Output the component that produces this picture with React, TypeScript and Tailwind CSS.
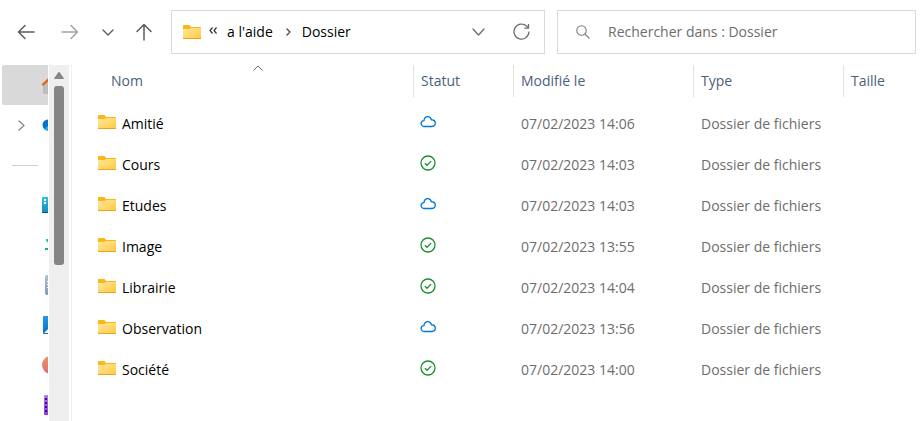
import React from "react";

type Status = "cloud" | "local";

interface Folder {
  name: string;
  status: Status;
  modified: string;
}

const folders: Folder[] = [
  { name: "Amitié", status: "cloud", modified: "07/02/2023 14:06" },
  { name: "Cours", status: "local", modified: "07/02/2023 14:03" },
  { name: "Etudes", status: "cloud", modified: "07/02/2023 14:03" },
  { name: "Image", status: "local", modified: "07/02/2023 13:55" },
  { name: "Librairie", status: "local", modified: "07/02/2023 14:04" },
  { name: "Observation", status: "cloud", modified: "07/02/2023 13:56" },
  { name: "Société", status: "local", modified: "07/02/2023 14:00" },
];

function FolderIcon() {
  return (
    <svg width="18" height="14" viewBox="0 0 18 14" className="shrink-0" aria-hidden="true">
      <defs>
        <linearGradient id="folder-front" x1="0" y1="0" x2="1" y2="1">
          <stop offset="0" stopColor="#ffe7a0" />
          <stop offset="1" stopColor="#ffca3e" />
        </linearGradient>
      </defs>
      <path d="M0 .5Q0 0 .5 0H6.500L8 2h9.500q.5 0 .5.500V5H0z" fill="#f9b719" />
      <path d="M0 4h6.500L8 3h10v10.500H0z" fill="url(#folder-front)" />
      <path d="M0 13h18v.5q0 .5-.5.500H.5Q0 14 0 13.500z" fill="#e6a61e" />
    </svg>
  );
}

function Chevron({ dir, width, height, color }: { dir: "down" | "right"; width: number; height: number; color: string }) {
  const d =
    dir === "down"
      ? `M1 1L${width / 2} ${height - 1}L${width - 1} 1`
      : `M1 1L${width - 1} ${height / 2}L1 ${height - 1}`;
  return (
    <svg width={width} height={height} fill="none" stroke={color} strokeWidth="1.4" strokeLinecap="round" strokeLinejoin="round" aria-hidden="true">
      <path d={d} />
    </svg>
  );
}

function Arrow({ d, color }: { d: string; color: string }) {
  return (
    <svg width="18" height="18" viewBox="0 0 18 18" fill="none" stroke={color} strokeWidth="1.500" strokeLinecap="round" strokeLinejoin="round" aria-hidden="true">
      <path d={d} />
    </svg>
  );
}

function StatusIcon({ status }: { status: Status }) {
  if (status === "cloud") {
    return (
      <svg width="16" height="16" viewBox="0 0 16 16" fill="none" stroke="#0078d7" strokeWidth="1.300" strokeLinejoin="round" role="img" aria-label="Disponible en ligne">
        <path d="M4 12.500A2.900 2.900 0 0 1 4 6.700C4 4.300 5.600 2.600 7.700 2.600c1.900 0 3.200 1.200 3.700 3.200h.8c1.800.1 3.100 1.500 3.100 3.300 0 1.900-1.400 3.400-3.300 3.400z" />
      </svg>
    );
  }
  return (
    <svg width="16" height="16" viewBox="0 0 16 16" fill="none" stroke="#1a8f2e" strokeWidth="1.300" role="img" aria-label="Disponible sur cet appareil">
      <circle cx="8" cy="8" r="7" />
      <path d="M4.900 8.200L7 10.300 11.200 6.100" />
    </svg>
  );
}

function HomeIcon() {
  return (
    <svg width="20" height="20" viewBox="0 0 20 20" aria-hidden="true">
      <path d="M1 9l9-7 9 7v9q0 1-1 1H2q-1 0-1-1z" fill="#bdbdbd" />
      <path d="M1 9.500L10 1l9 8.500" fill="none" stroke="#e8640c" strokeWidth="2.400" strokeLinecap="round" />
    </svg>
  );
}

function OneDriveIcon() {
  return (
    <svg width="20" height="12" viewBox="0 0 20 12" aria-hidden="true">
      <path d="M6 11.500A5.500 5.500 0 0 1 6 .500Q9-.5 12 2.500q6 0 7 5 0 4-3 4z" fill="#0a6fd0" />
      <path d="M2.500 10L7 5.500l11 4-3 2H6q-2 0-3.500-1.500z" fill="#23a8f2" />
    </svg>
  );
}

function DesktopIcon() {
  return (
    <svg width="20" height="16" viewBox="0 0 20 16" aria-hidden="true">
      <defs>
        <linearGradient id="desktop" x1="0" y1="0" x2="0" y2="1">
          <stop offset="0" stopColor="#2bc4dc" />
          <stop offset="1" stopColor="#1488c4" />
        </linearGradient>
      </defs>
      <path d="M0 1q0-1 1-1h18v16H1q-1 0-1-1z" fill="url(#desktop)" />
      <path d="M2 2h2v2H2zM2 5h2v2H2z" fill="#fff" />
      <path d="M0 15h20v1H1q-1 0-1-1z" fill="#0a4f80" />
    </svg>
  );
}

function DownloadIcon() {
  return (
    <svg width="16" height="12" viewBox="0 0 16 12" fill="#2fc48b" aria-hidden="true">
      <path d="M1 0h2l5 5 5-5h2L8 8 1 2z" />
      <path d="M0 9h16v2H0z" fill="#1fae84" />
    </svg>
  );
}

function DocumentIcon() {
  return (
    <svg width="16" height="20" viewBox="0 0 16 20" aria-hidden="true">
      <defs>
        <linearGradient id="document" x1="0" y1="0" x2="0" y2="1">
          <stop offset="0" stopColor="#b3c1d6" />
          <stop offset="1" stopColor="#8298bd" />
        </linearGradient>
      </defs>
      <path d="M2 0h14v20H2q-2 0-2-2V2q0-2 2-2z" fill="url(#document)" />
      <path d="M2 6h12v1H2zM2 9h12v1H2zM2 12h12v1H2z" fill="#fff" />
    </svg>
  );
}

function PictureIcon() {
  return (
    <svg width="18" height="18" viewBox="0 0 18 18" aria-hidden="true">
      <defs>
        <linearGradient id="picture" x1="0" y1="0" x2="0" y2="1">
          <stop offset="0" stopColor="#1c9ee6" />
          <stop offset="1" stopColor="#0f6cbd" />
        </linearGradient>
      </defs>
      <rect width="18" height="18" rx="1" fill="url(#picture)" />
      <path d="M1 17l8-8 8 8z" fill="#e8f6ff" />
    </svg>
  );
}

function MusicIcon() {
  return (
    <svg width="18" height="18" viewBox="0 0 18 18" aria-hidden="true">
      <defs>
        <linearGradient id="music" x1="0" y1="0" x2="0" y2="1">
          <stop offset="0" stopColor="#f0915c" />
          <stop offset="1" stopColor="#d8707c" />
        </linearGradient>
      </defs>
      <circle cx="9" cy="9" r="9" fill="url(#music)" />
    </svg>
  );
}

function VideoIcon() {
  return (
    <svg width="16" height="20" viewBox="0 0 16 20" aria-hidden="true">
      <defs>
        <linearGradient id="video" x1="0" y1="0" x2="0" y2="1">
          <stop offset="0" stopColor="#b57bf0" />
          <stop offset="1" stopColor="#8a3fe0" />
        </linearGradient>
      </defs>
      <rect width="16" height="20" rx="1" fill="url(#video)" />
      <path d="M1 3h2v2H1zM1 7h2v2H1zM1 11h2v2H1zM1 15h2v2H1z" fill="#3b1470" />
    </svg>
  );
}

function Toolbar() {
  return (
    <header className="flex h-[65px] shrink-0 items-start gap-3 pt-[10px] pr-[6px]">
      <div className="flex h-11 w-[159px] shrink-0 items-center pl-[17px]">
        <button type="button" aria-label="Précédent" className="mr-[26px]">
          <Arrow color="#5c5c5c" d="M17 9H1.500M8 2.500L1.500 9 8 15.500" />
        </button>
        <button type="button" aria-label="Suivant" className="mr-[23px]">
          <Arrow color="#a3a3a3" d="M1 9h15.500M10 2.500L16.500 9 10 15.500" />
        </button>
        <button type="button" aria-label="Emplacements récents" className="mr-[21px]">
          <Chevron dir="down" width={12} height={7} color="#5c5c5c" />
        </button>
        <button type="button" aria-label="Dossier parent">
          <Arrow color="#5c5c5c" d="M9 17V1.500M2 8.500L9 1.500l7 7" />
        </button>
      </div>

      <nav aria-label="Barre d'adresse" className="flex h-11 min-w-0 flex-1 items-center border border-[#d9d9d9] pr-[14px] pl-[11px] text-black">
        <FolderIcon />
        <button type="button" aria-label="Dossiers masqués" className="mr-[10px] ml-2 pb-1">
          <svg width="8" height="7" viewBox="0 0 8 7" fill="none" stroke="#333333" strokeWidth="1.200" className="block" aria-hidden="true">
            <path d="M3.500.5L1 3.500l2.500 3M7.500.5L5 3.500l2.500 3" />
          </svg>
        </button>
        <a href="#aide">a l'aide</a>
        <span className="mr-[11px] ml-[13px]">
          <Chevron dir="right" width={5} height={8} color="#4a4a4a" />
        </span>
        <a href="#dossier">Dossier</a>
        <button type="button" aria-label="Historique" className="ml-auto">
          <Chevron dir="down" width={13} height={8} color="#707070" />
        </button>
        <button type="button" aria-label="Actualiser" className="ml-7">
          <svg width="17" height="18" viewBox="0 0 17 18" fill="none" stroke="#707070" strokeWidth="1.300" aria-hidden="true">
            <path d="M16 8.500A7.500 7.500 0 1 1 13.500 3L15.500 5" />
            <path d="M15.500 1v4.200h-4.200" />
          </svg>
        </button>
      </nav>

      <label className="flex h-11 w-[359px] shrink items-center border border-[#d9d9d9] pl-[18px]">
        <svg width="15" height="15" viewBox="0 0 15 15" fill="none" stroke="#808080" strokeWidth="1.100" className="shrink-0" aria-hidden="true">
          <circle cx="5.500" cy="5.500" r="4.700" />
          <path d="M9 9l4.500 4.500" />
        </svg>
        <input
          type="search"
          aria-label="Rechercher dans : Dossier"
          placeholder="Rechercher dans : Dossier"
          className="ml-[17px] min-w-0 flex-1 outline-none placeholder:text-[#6d6d6d]"
        />
      </label>
    </header>
  );
}

function SideRow({ label, inset, children }: { label: string; inset: string; children: React.ReactNode }) {
  return (
    <a href="#nav" aria-label={label} className={`flex h-10 w-20 shrink-0 items-center ${inset}`}>
      {children}
    </a>
  );
}

function Sidebar() {
  return (
    <aside className="flex shrink-0 border-r border-[#f0f0f0] pr-[2px] pl-[2px]">
      <div className="mr-px flex w-[46px] flex-col overflow-hidden">
        <div className="flex w-20 shrink-0 rounded-xs bg-[#d9d9d9]">
          <SideRow label="Accueil" inset="pl-10">
            <HomeIcon />
          </SideRow>
        </div>
        <div className="flex h-10 w-20 shrink-0 items-center">
          <button type="button" aria-label="Développer OneDrive" className="ml-4 shrink-0">
            <Chevron dir="right" width={7} height={11} color="#8a8a8a" />
          </button>
          <a href="#onedrive" aria-label="OneDrive" className="ml-[17px] shrink-0">
            <OneDriveIcon />
          </a>
        </div>
        <div className="flex h-10 shrink-0 items-center">
          <hr className="ml-[10px] w-[26px] border-t border-[#d0d0d0]" />
        </div>
        <SideRow label="Bureau" inset="pl-10">
          <DesktopIcon />
        </SideRow>
        <SideRow label="Téléchargements" inset="pl-[43px]">
          <DownloadIcon />
        </SideRow>
        <SideRow label="Documents" inset="pl-[43px]">
          <DocumentIcon />
        </SideRow>
        <SideRow label="Images" inset="pl-[41px]">
          <PictureIcon />
        </SideRow>
        <SideRow label="Musique" inset="pl-10">
          <MusicIcon />
        </SideRow>
        <SideRow label="Vidéos" inset="pl-[42px]">
          <VideoIcon />
        </SideRow>
      </div>
      <div className="flex w-5 flex-col items-center bg-[#efefef] pt-[7px]">
        <svg width="10" height="7" viewBox="0 0 10 7" className="shrink-0" aria-hidden="true">
          <path d="M4.200.5q.8-.8 1.600 0L9.700 6q.3 1-.7 1H1Q0 7 .3 6z" fill="#858585" />
        </svg>
        <div className="mt-[7px] h-[179px] w-[10px] shrink-0 rounded-[3px] bg-[#858585]" />
      </div>
    </aside>
  );
}

function HeaderCell({ children }: { children: string }) {
  return (
    <th className="p-0 align-top font-normal">
      <button type="button" className="flex h-8 w-full items-center border-l border-[#e2e2e2] pl-[7px] text-left">
        {children}
      </button>
    </th>
  );
}

function FileTable() {
  return (
    <table className="w-full table-fixed border-collapse text-left">
      <colgroup>
        <col className="w-[341px]" />
        <col className="w-[100px]" />
        <col className="w-[180px]" />
        <col className="w-[150px]" />
        <col />
      </colgroup>
      <thead className="text-[#4c607a]">
        <tr className="h-[38px]">
          <th className="p-0 pl-[31px] align-top font-normal" aria-sort="ascending">
            <button type="button" className="relative flex h-8 w-full items-center pl-2 text-left">
              Nom
              <span className="absolute top-0 left-1/2 -translate-x-1/2">
                <svg width="10" height="7" viewBox="0 0 10 7" fill="none" stroke="#6b6b6b" className="block" aria-hidden="true">
                  <path d="M.5 5.500L5 1 9.500 5.500" />
                </svg>
              </span>
            </button>
          </th>
          <HeaderCell>Statut</HeaderCell>
          <HeaderCell>Modifié le</HeaderCell>
          <HeaderCell>Type</HeaderCell>
          <HeaderCell>Taille</HeaderCell>
        </tr>
      </thead>
      <tbody className="text-[#6d6d6d]">
        {folders.map((folder) => (
          <tr key={folder.name} className="h-[41px]">
            <td className="p-0 pl-[26px]">
              <a href="#open" className="flex items-center gap-[6px] text-black">
                <span className="pb-[3px]">
                  <FolderIcon />
                </span>
                {folder.name}
              </a>
            </td>
            <td className="p-0 pb-[3px] pl-[7px]">
              <div className="flex">
                <StatusIcon status={folder.status} />
              </div>
            </td>
            <td className="p-0 pl-2">{folder.modified}</td>
            <td className="p-0 pl-2">Dossier de fichiers</td>
            <td className="p-0" />
          </tr>
        ))}
      </tbody>
    </table>
  );
}

export default function App() {
  return (
    <div className="flex h-screen flex-col overflow-hidden bg-white font-['Open_Sans','Noto_Sans',sans-serif] text-sm">
      <Toolbar />
      <div className="flex min-h-0 flex-1">
        <Sidebar />
        <main className="min-w-0 flex-1">
          <FileTable />
        </main>
      </div>
    </div>
  );
}
